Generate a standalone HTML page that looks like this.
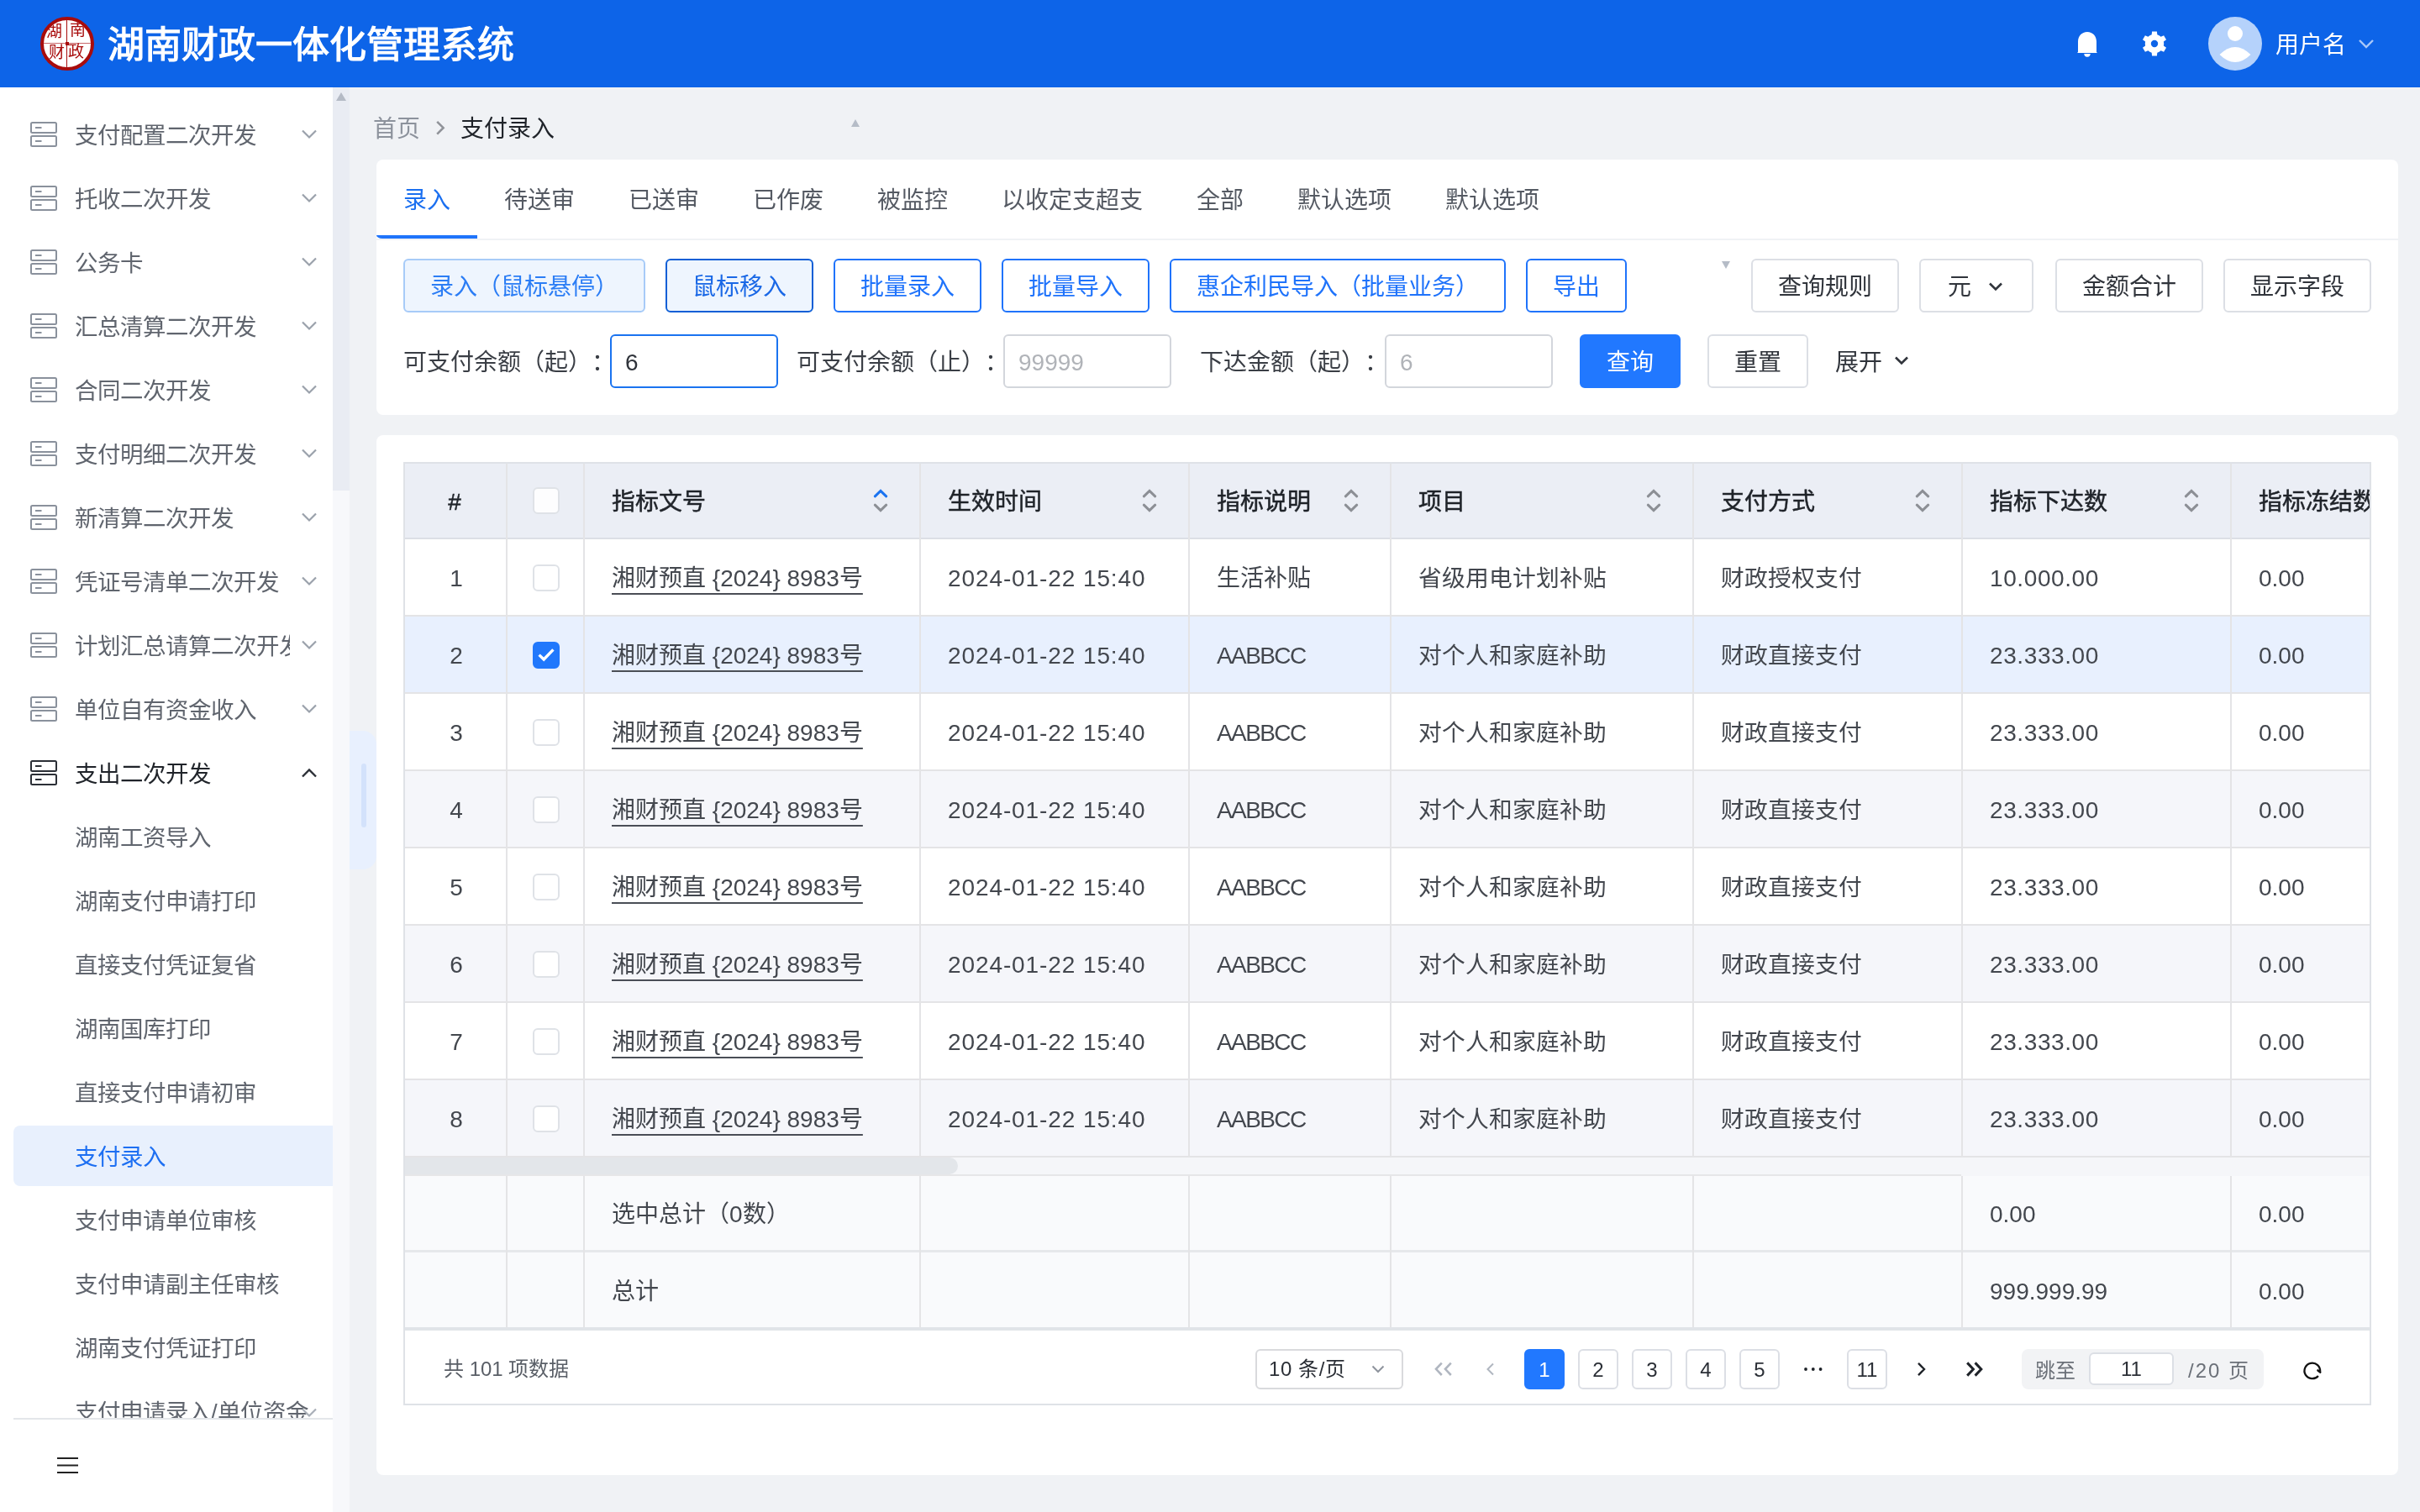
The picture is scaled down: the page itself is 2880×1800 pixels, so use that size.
<!DOCTYPE html><html lang="zh-CN"><head><meta charset="utf-8"><title>湖南财政一体化管理系统</title><style>

*{box-sizing:border-box;margin:0;padding:0}
html,body{width:2880px;height:1800px;overflow:hidden}
body{position:relative;text-spacing-trim:space-all;background:#f0f2f5;font-family:"Liberation Sans", sans-serif;font-size:28px;color:#333}
.a{position:absolute}
.t{position:absolute;white-space:nowrap;line-height:40px;margin-top:2px}
#hdr{left:0;top:0;width:2880px;height:104px;background:#0d64e8}
#side{left:0;top:104px;width:396px;height:1696px;background:#fff;overflow:hidden}
.mi{position:absolute;left:0;width:396px;height:76px}
.mi .ic{position:absolute;left:36px;top:23px;width:32px;height:30px}
.mi .tx{position:absolute;left:89px;top:20px;line-height:40px;font-size:27.5px;color:#60656e;white-space:nowrap}
.mi .ch{position:absolute;left:358px;top:32px;width:20px;height:12px}
.card{position:absolute;background:#fff;border-radius:8px}
.btn{position:absolute;height:64px;border:2px solid #1f73fb;border-radius:6px;color:#1f73fb;font-size:28px;line-height:60px;padding-top:2px;text-align:center;white-space:nowrap;background:#fff}
.btn.g{border-color:#dcdfe5;color:#30343b}
.inp{position:absolute;height:64px;width:200px;border:2px solid #d3d6dc;border-radius:6px;font-size:28px;line-height:60px;padding-top:2px;padding-left:16px;color:#b0b3b8;background:#fff}
.lbl{position:absolute;margin-top:2px;font-size:28px;line-height:40px;color:#3a3e45;white-space:nowrap}
.tab{position:absolute;top:219px;font-size:28px;line-height:40px;color:#555a63;white-space:nowrap}
.vl{position:absolute;width:2px;background:#e4e4e6}
.hl{position:absolute;height:2px;background:#e4e4e6}
.cell{position:absolute;margin-top:2px;font-size:28px;line-height:40px;color:#43474e;white-space:nowrap}
.hc{position:absolute;margin-top:2px;font-size:28px;line-height:40px;color:#1f2329;font-weight:normal;-webkit-text-stroke:0.5px #1f2329;white-space:nowrap}
.cb{position:absolute;width:32px;height:32px;border:2px solid #dfe2e7;border-radius:6px;background:#fff}
.pg{position:absolute;top:1606px;width:48px;height:48px;border:2px solid #dcdfe5;border-radius:6px;font-size:24px;line-height:44px;padding-top:1px;text-align:center;color:#2b2f36;background:#fff}

</style></head><body><div id="root" style="position:absolute;left:0;top:0;width:2880px;height:1800px;overflow:hidden;will-change:transform">
<div id="hdr" class="a">
<div class="a" style="left:48px;top:20px;width:64px;height:64px;border-radius:50%;background:#fff;border:4.5px solid #a80c0c;overflow:hidden;font-size:19px;line-height:19px;color:#a80c0c">
<div class="a" style="left:27px;top:0;width:1.4px;height:64px;background:#a80c0c"></div>
<div class="a" style="left:0;top:27px;width:64px;height:1.2px;background:#c9686b"></div>
<div class="a" style="left:26px;top:26px;width:3.5px;height:3.5px;background:#a80c0c"></div>
<span class="a" style="left:3px;top:4px">湖</span><span class="a" style="left:31px;top:2px">南</span>
<span class="a" style="left:6px;top:29px">财</span><span class="a" style="left:29px;top:28px">政</span>
</div>
<div class="t" style="left:128px;top:22px;font-size:44px;line-height:60px;color:#fff;font-weight:normal;-webkit-text-stroke:1.2px #fff;letter-spacing:0px">湖南财政一体化管理系统</div>
<svg class="a" style="left:2472px;top:38px" width="24" height="30" viewBox="0 0 24 30">
<path d="M12 0 C5.5 0 1 5 1 11.5 V24.5 H0 V25 H24 V24.5 H23 V11.5 C23 5 18.5 0 12 0 Z" fill="#fff"/>
<path d="M8.3 26 H15.7 A3.7 3.7 0 0 1 8.3 26 Z" fill="#fff"/>
</svg>
<svg class="a" style="left:2549px;top:37px" width="30" height="30" viewBox="0 0 30 30"><path fill="#fff" fill-rule="evenodd" d="M11.69 4.30 L12.06 0.50 L17.94 0.50 L18.31 4.30 A11.20 11.20 0 0 1 22.61 6.78 L26.09 5.20 L29.03 10.29 L25.92 12.52 A11.20 11.20 0 0 1 25.92 17.48 L29.03 19.71 L26.09 24.80 L22.61 23.22 A11.20 11.20 0 0 1 18.31 25.70 L17.94 29.50 L12.06 29.50 L11.69 25.70 A11.20 11.20 0 0 1 7.39 23.22 L3.91 24.80 L0.97 19.71 L4.08 17.48 A11.20 11.20 0 0 1 4.08 12.52 L0.97 10.29 L3.91 5.20 L7.39 6.78 A11.20 11.20 0 0 1 11.69 4.30 Z M19.2 15 A4.2 4.2 0 1 0 10.8 15 A4.2 4.2 0 1 0 19.2 15 Z"/></svg>
<svg class="a" style="left:2628px;top:20px" width="64" height="64" viewBox="0 0 64 64">
<circle cx="32" cy="32" r="32" fill="#b5d2fb"/>
<circle cx="32" cy="20" r="9" fill="#fff"/>
<path d="M13.5 45 Q32 27 50.5 45 Q32 63 13.5 45 Z" fill="#fff"/>
</svg>
<div class="t" style="left:2708px;top:32px;font-size:28px;color:#fff">用户名</div>
<svg class="a" style="left:2806px;top:46px" width="20" height="12" viewBox="0 0 20 12"><path d="M2 2 L10 10 L18 2" fill="none" stroke="#a9c8f8" stroke-width="2.4"/></svg>
</div>
<div id="side" class="a">
<div class="mi" style="top:18px"><svg class="ic" viewBox="0 0 32 30"><g fill="none" stroke="#8a919c" stroke-width="2"><rect x="1" y="1" width="30" height="12" rx="1.5"/><rect x="1" y="17" width="30" height="12" rx="1.5"/></g><rect x="6" y="6" width="7.5" height="2" fill="#8a919c"/><rect x="6" y="22" width="7.5" height="2" fill="#8a919c"/></svg><div class="tx" style="color:#60656e;">支付配置二次开发</div><svg class="ch" viewBox="0 0 20 12"><path d="M2 1.5 L10 9.5 L18 1.5" fill="none" stroke="#9aa1ab" stroke-width="2.2"/></svg></div>
<div class="mi" style="top:94px"><svg class="ic" viewBox="0 0 32 30"><g fill="none" stroke="#8a919c" stroke-width="2"><rect x="1" y="1" width="30" height="12" rx="1.5"/><rect x="1" y="17" width="30" height="12" rx="1.5"/></g><rect x="6" y="6" width="7.5" height="2" fill="#8a919c"/><rect x="6" y="22" width="7.5" height="2" fill="#8a919c"/></svg><div class="tx" style="color:#60656e;">托收二次开发</div><svg class="ch" viewBox="0 0 20 12"><path d="M2 1.5 L10 9.5 L18 1.5" fill="none" stroke="#9aa1ab" stroke-width="2.2"/></svg></div>
<div class="mi" style="top:170px"><svg class="ic" viewBox="0 0 32 30"><g fill="none" stroke="#8a919c" stroke-width="2"><rect x="1" y="1" width="30" height="12" rx="1.5"/><rect x="1" y="17" width="30" height="12" rx="1.5"/></g><rect x="6" y="6" width="7.5" height="2" fill="#8a919c"/><rect x="6" y="22" width="7.5" height="2" fill="#8a919c"/></svg><div class="tx" style="color:#60656e;">公务卡</div><svg class="ch" viewBox="0 0 20 12"><path d="M2 1.5 L10 9.5 L18 1.5" fill="none" stroke="#9aa1ab" stroke-width="2.2"/></svg></div>
<div class="mi" style="top:246px"><svg class="ic" viewBox="0 0 32 30"><g fill="none" stroke="#8a919c" stroke-width="2"><rect x="1" y="1" width="30" height="12" rx="1.5"/><rect x="1" y="17" width="30" height="12" rx="1.5"/></g><rect x="6" y="6" width="7.5" height="2" fill="#8a919c"/><rect x="6" y="22" width="7.5" height="2" fill="#8a919c"/></svg><div class="tx" style="color:#60656e;">汇总清算二次开发</div><svg class="ch" viewBox="0 0 20 12"><path d="M2 1.5 L10 9.5 L18 1.5" fill="none" stroke="#9aa1ab" stroke-width="2.2"/></svg></div>
<div class="mi" style="top:322px"><svg class="ic" viewBox="0 0 32 30"><g fill="none" stroke="#8a919c" stroke-width="2"><rect x="1" y="1" width="30" height="12" rx="1.5"/><rect x="1" y="17" width="30" height="12" rx="1.5"/></g><rect x="6" y="6" width="7.5" height="2" fill="#8a919c"/><rect x="6" y="22" width="7.5" height="2" fill="#8a919c"/></svg><div class="tx" style="color:#60656e;">合同二次开发</div><svg class="ch" viewBox="0 0 20 12"><path d="M2 1.5 L10 9.5 L18 1.5" fill="none" stroke="#9aa1ab" stroke-width="2.2"/></svg></div>
<div class="mi" style="top:398px"><svg class="ic" viewBox="0 0 32 30"><g fill="none" stroke="#8a919c" stroke-width="2"><rect x="1" y="1" width="30" height="12" rx="1.5"/><rect x="1" y="17" width="30" height="12" rx="1.5"/></g><rect x="6" y="6" width="7.5" height="2" fill="#8a919c"/><rect x="6" y="22" width="7.5" height="2" fill="#8a919c"/></svg><div class="tx" style="color:#60656e;">支付明细二次开发</div><svg class="ch" viewBox="0 0 20 12"><path d="M2 1.5 L10 9.5 L18 1.5" fill="none" stroke="#9aa1ab" stroke-width="2.2"/></svg></div>
<div class="mi" style="top:474px"><svg class="ic" viewBox="0 0 32 30"><g fill="none" stroke="#8a919c" stroke-width="2"><rect x="1" y="1" width="30" height="12" rx="1.5"/><rect x="1" y="17" width="30" height="12" rx="1.5"/></g><rect x="6" y="6" width="7.5" height="2" fill="#8a919c"/><rect x="6" y="22" width="7.5" height="2" fill="#8a919c"/></svg><div class="tx" style="color:#60656e;">新清算二次开发</div><svg class="ch" viewBox="0 0 20 12"><path d="M2 1.5 L10 9.5 L18 1.5" fill="none" stroke="#9aa1ab" stroke-width="2.2"/></svg></div>
<div class="mi" style="top:550px"><svg class="ic" viewBox="0 0 32 30"><g fill="none" stroke="#8a919c" stroke-width="2"><rect x="1" y="1" width="30" height="12" rx="1.5"/><rect x="1" y="17" width="30" height="12" rx="1.5"/></g><rect x="6" y="6" width="7.5" height="2" fill="#8a919c"/><rect x="6" y="22" width="7.5" height="2" fill="#8a919c"/></svg><div class="tx" style="color:#60656e;">凭证号清单二次开发</div><svg class="ch" viewBox="0 0 20 12"><path d="M2 1.5 L10 9.5 L18 1.5" fill="none" stroke="#9aa1ab" stroke-width="2.2"/></svg></div>
<div class="mi" style="top:626px"><svg class="ic" viewBox="0 0 32 30"><g fill="none" stroke="#8a919c" stroke-width="2"><rect x="1" y="1" width="30" height="12" rx="1.5"/><rect x="1" y="17" width="30" height="12" rx="1.5"/></g><rect x="6" y="6" width="7.5" height="2" fill="#8a919c"/><rect x="6" y="22" width="7.5" height="2" fill="#8a919c"/></svg><div class="tx" style="color:#60656e;overflow:hidden;width:256px;">计划汇总请算二次开发</div><svg class="ch" viewBox="0 0 20 12"><path d="M2 1.5 L10 9.5 L18 1.5" fill="none" stroke="#9aa1ab" stroke-width="2.2"/></svg></div>
<div class="mi" style="top:702px"><svg class="ic" viewBox="0 0 32 30"><g fill="none" stroke="#8a919c" stroke-width="2"><rect x="1" y="1" width="30" height="12" rx="1.5"/><rect x="1" y="17" width="30" height="12" rx="1.5"/></g><rect x="6" y="6" width="7.5" height="2" fill="#8a919c"/><rect x="6" y="22" width="7.5" height="2" fill="#8a919c"/></svg><div class="tx" style="color:#60656e;">单位自有资金收入</div><svg class="ch" viewBox="0 0 20 12"><path d="M2 1.5 L10 9.5 L18 1.5" fill="none" stroke="#9aa1ab" stroke-width="2.2"/></svg></div>
<div class="mi" style="top:778px"><svg class="ic" viewBox="0 0 32 30"><g fill="none" stroke="#2b2f36" stroke-width="2"><rect x="1" y="1" width="30" height="12" rx="1.5"/><rect x="1" y="17" width="30" height="12" rx="1.5"/></g><rect x="6" y="6" width="7.5" height="2" fill="#2b2f36"/><rect x="6" y="22" width="7.5" height="2" fill="#2b2f36"/></svg><div class="tx" style="color:#1f2329;">支出二次开发</div><svg class="ch" viewBox="0 0 20 12"><path d="M2 10.5 L10 2.5 L18 10.5" fill="none" stroke="#2b2f36" stroke-width="2.4"/></svg></div>
<div class="mi" style="top:854px"><div class="tx">湖南工资导入</div></div>
<div class="mi" style="top:930px"><div class="tx">湖南支付申请打印</div></div>
<div class="mi" style="top:1006px"><div class="tx">直接支付凭证复省</div></div>
<div class="mi" style="top:1082px"><div class="tx">湖南国库打印</div></div>
<div class="mi" style="top:1158px"><div class="tx">直接支付申请初审</div></div>
<div class="a" style="left:16px;top:1236px;width:380px;height:72px;background:#e8f0fd;border-radius:8px 0 0 8px"></div>
<div class="mi" style="top:1234px"><div class="tx" style="color:#1d6ff2">支付录入</div></div>
<div class="mi" style="top:1310px"><div class="tx">支付申请单位审核</div></div>
<div class="mi" style="top:1386px"><div class="tx">支付申请副主任审核</div></div>
<div class="mi" style="top:1462px"><div class="tx">湖南支付凭证打印</div></div>
<div class="mi" style="top:1538px"><div class="tx">支付申请录入/单位资金</div></div>
<svg class="a" style="left:358px;top:1572px" width="20" height="12" viewBox="0 0 20 12"><path d="M2 1.5 L10 9.5 L18 1.5" fill="none" stroke="#a9afb8" stroke-width="2.2"/></svg>
<div class="a" style="left:0;top:1584px;width:396px;height:200px;background:#fff"></div>
<div class="a" style="left:16px;top:1584px;width:380px;height:2px;background:#e4e6ea"></div>
<svg class="a" style="left:68px;top:1631px" width="25" height="19" viewBox="0 0 25 19"><g stroke="#222" stroke-width="2"><line x1="0" y1="1" x2="25" y2="1"/><line x1="0" y1="9.5" x2="25" y2="9.5"/><line x1="0" y1="18" x2="25" y2="18"/></g></svg>
</div>
<div class="a" style="left:396px;top:104px;width:20px;height:1696px;background:#f7f8fb"></div>
<div class="a" style="left:396px;top:104px;width:20px;height:480px;background:#e9ecf3"></div>
<svg class="a" style="left:400px;top:110px" width="12" height="10" viewBox="0 0 12 10"><path d="M6 0 L12 10 L0 10 Z" fill="#b4bac5"/></svg>
<div class="a" style="left:416px;top:870px;width:32px;height:165px;background:#e8f0fe;border-radius:0 16px 16px 0"></div>
<div class="a" style="left:430px;top:909px;width:6px;height:76px;background:#d3e2fb;border-radius:3px"></div>
<div class="t" style="left:444px;top:132px;color:#8c929c">首页</div>
<svg class="a" style="left:518px;top:143px" width="13" height="18" viewBox="0 0 13 18"><path d="M2.2 1.8 L9.6 9.2 L2.2 16.6" fill="none" stroke="#909399" stroke-width="2.6"/></svg>
<div class="t" style="left:548px;top:132px;color:#1f2329">支付录入</div>
<svg class="a" style="left:1013px;top:142px" width="10" height="9" viewBox="0 0 10 9"><path d="M5 0 L10 9 L0 9 Z" fill="#b5bcc7"/></svg>
<div class="card" style="left:448px;top:190px;width:2406px;height:304px"></div>
<div class="tab" style="left:480px;color:#1a6ff0">录入</div>
<div class="tab" style="left:600px;color:#555a63">待送审</div>
<div class="tab" style="left:748px;color:#555a63">已送审</div>
<div class="tab" style="left:896px;color:#555a63">已作废</div>
<div class="tab" style="left:1044px;color:#555a63">被监控</div>
<div class="tab" style="left:1192px;color:#555a63">以收定支超支</div>
<div class="tab" style="left:1424px;color:#555a63">全部</div>
<div class="tab" style="left:1544px;color:#555a63">默认选项</div>
<div class="tab" style="left:1720px;color:#555a63">默认选项</div>
<div class="a" style="left:448px;top:284px;width:2406px;height:2px;background:#f0f2f5"></div>
<div class="a" style="left:448px;top:280px;width:120px;height:4px;background:#1f74fb;border-radius:0 0 0 7px / 0 0 0 4px"></div>
<div class="btn" style="left:480px;top:308px;width:288px;background:#eef5fe;border-color:#a7cbf8;color:#2b7df5">录入（鼠标悬停）</div>
<div class="btn" style="left:792px;top:308px;width:176px;background:#eef5fe;border-color:#0e5fd6;color:#1a68e6">鼠标移入</div>
<div class="btn" style="left:992px;top:308px;width:176px">批量录入</div>
<div class="btn" style="left:1192px;top:308px;width:176px">批量导入</div>
<div class="btn" style="left:1392px;top:308px;width:400px">惠企利民导入（批量业务）</div>
<div class="btn" style="left:1816px;top:308px;width:120px">导出</div>
<svg class="a" style="left:2049px;top:311px" width="10" height="9" viewBox="0 0 10 9"><path d="M0 0 L10 0 L5 9 Z" fill="#b5bcc7"/></svg>
<div class="btn g" style="left:2084px;top:308px;width:176px">查询规则</div>
<div class="btn g" style="left:2284px;top:308px;width:136px;text-align:left;padding-left:32px">元<svg class="a" style="left:80px;top:26px" width="18" height="11" viewBox="0 0 18 11"><path d="M2 1.5 L9 8.5 L16 1.5" fill="none" stroke="#30343b" stroke-width="2.6"/></svg></div>
<div class="btn g" style="left:2446px;top:308px;width:176px">金额合计</div>
<div class="btn g" style="left:2646px;top:308px;width:176px">显示字段</div>
<div class="lbl" style="left:480px;top:410px">可支付余额（起）：</div>
<div class="inp" style="left:726px;top:398px;border-color:#1a73f0;color:#30343b">6</div>
<div class="lbl" style="left:948px;top:410px">可支付余额（止）：</div>
<div class="inp" style="left:1194px;top:398px">99999</div>
<div class="lbl" style="left:1428px;top:410px">下达金额（起）：</div>
<div class="inp" style="left:1648px;top:398px">6</div>
<div class="btn" style="left:1880px;top:398px;width:120px;background:#2178ff;border-color:#2178ff;color:#fff">查询</div>
<div class="btn g" style="left:2032px;top:398px;width:120px">重置</div>
<div class="lbl" style="left:2184px;top:410px;color:#30343b">展开</div>
<svg class="a" style="left:2254px;top:424px" width="18" height="11" viewBox="0 0 18 11"><path d="M2 1.5 L9 8.5 L16 1.5" fill="none" stroke="#30343b" stroke-width="2.6"/></svg>
<div class="card" style="left:448px;top:518px;width:2406px;height:1238px"></div>
<div class="a" style="left:480px;top:550px;width:2342px;height:1123px;overflow:hidden;border:2px solid #dfe2e7;border-right:2px solid #dfe2e7">
<div class="a" style="left:0;top:0;width:2400px;height:88px;background:#ebeef5"></div>
<div class="a" style="left:0;top:89px;width:2400px;height:92px;background:#fff"></div>
<div class="a" style="left:0;top:181px;width:2400px;height:92px;background:#e8f0fe"></div>
<div class="a" style="left:0;top:273px;width:2400px;height:92px;background:#fff"></div>
<div class="a" style="left:0;top:365px;width:2400px;height:92px;background:#f5f6fa"></div>
<div class="a" style="left:0;top:457px;width:2400px;height:92px;background:#fff"></div>
<div class="a" style="left:0;top:549px;width:2400px;height:92px;background:#f5f6fa"></div>
<div class="a" style="left:0;top:641px;width:2400px;height:92px;background:#fff"></div>
<div class="a" style="left:0;top:733px;width:2400px;height:92px;background:#f5f6fa"></div>
<div class="a" style="left:0;top:826px;width:2400px;height:22px;background:#f5f6f9"></div>
<div class="a" style="left:0;top:826px;width:658px;height:20px;background:#e3e6ea;border-radius:0 10px 10px 0"></div>
<div class="a" style="left:0;top:848px;width:2400px;height:184px;background:#f9fafc"></div>
<div class="a" style="left:0;top:1032px;width:2400px;height:100px;background:#fff"></div>
<div class="hl" style="left:0;top:88px;width:2400px;background:#dcdfe5"></div>
<div class="hl" style="left:0;top:180px;width:2400px"></div>
<div class="hl" style="left:0;top:272px;width:2400px"></div>
<div class="hl" style="left:0;top:364px;width:2400px"></div>
<div class="hl" style="left:0;top:456px;width:2400px"></div>
<div class="hl" style="left:0;top:548px;width:2400px"></div>
<div class="hl" style="left:0;top:640px;width:2400px"></div>
<div class="hl" style="left:0;top:732px;width:2400px"></div>
<div class="hl" style="left:0;top:824px;width:2400px"></div>
<div class="hl" style="left:0;top:846px;width:1852px;background:#e6e6e8"></div>
<div class="hl" style="left:0;top:936px;width:2400px;height:3px;background:#e6e8eb"></div>
<div class="hl" style="left:0;top:1028px;width:2400px;height:4px;background:#e1e4e8"></div>
<div class="vl" style="left:120px;top:0;height:824px"></div>
<div class="vl" style="left:120px;top:848px;height:180px"></div>
<div class="vl" style="left:212px;top:0;height:824px"></div>
<div class="vl" style="left:212px;top:848px;height:180px"></div>
<div class="vl" style="left:612px;top:0;height:824px"></div>
<div class="vl" style="left:612px;top:848px;height:180px"></div>
<div class="vl" style="left:932px;top:0;height:824px"></div>
<div class="vl" style="left:932px;top:848px;height:180px"></div>
<div class="vl" style="left:1172px;top:0;height:824px"></div>
<div class="vl" style="left:1172px;top:848px;height:180px"></div>
<div class="vl" style="left:1532px;top:0;height:824px"></div>
<div class="vl" style="left:1532px;top:848px;height:180px"></div>
<div class="vl" style="left:1852px;top:0;height:824px"></div>
<div class="vl" style="left:1852px;top:848px;height:180px"></div>
<div class="vl" style="left:2172px;top:0;height:824px"></div>
<div class="vl" style="left:2172px;top:848px;height:180px"></div>
<div class="hc" style="left:-2px;top:24px;width:122px;text-align:center">#</div>
<div class="cb" style="left:152px;top:28px;background:#fdfdfe"></div>
<div class="hc" style="left:246px;top:24px">指标文号</div>
<svg class="a" style="left:556px;top:30px" width="20" height="28" viewBox="0 0 20 28"><path d="M3.3 8.8 L10 2.3 L16.7 8.8" fill="none" stroke="#1a73f0" stroke-width="3" stroke-linecap="round"/><path d="M3.3 19.2 L10 25.7 L16.7 19.2" fill="none" stroke="#8c8f95" stroke-width="3" stroke-linecap="round"/></svg>
<div class="hc" style="left:646px;top:24px">生效时间</div>
<svg class="a" style="left:876px;top:30px" width="20" height="28" viewBox="0 0 20 28"><path d="M3.3 8.8 L10 2.3 L16.7 8.8" fill="none" stroke="#8c8f95" stroke-width="3" stroke-linecap="round"/><path d="M3.3 19.2 L10 25.7 L16.7 19.2" fill="none" stroke="#8c8f95" stroke-width="3" stroke-linecap="round"/></svg>
<div class="hc" style="left:966px;top:24px">指标说明</div>
<svg class="a" style="left:1116px;top:30px" width="20" height="28" viewBox="0 0 20 28"><path d="M3.3 8.8 L10 2.3 L16.7 8.8" fill="none" stroke="#8c8f95" stroke-width="3" stroke-linecap="round"/><path d="M3.3 19.2 L10 25.7 L16.7 19.2" fill="none" stroke="#8c8f95" stroke-width="3" stroke-linecap="round"/></svg>
<div class="hc" style="left:1206px;top:24px">项目</div>
<svg class="a" style="left:1476px;top:30px" width="20" height="28" viewBox="0 0 20 28"><path d="M3.3 8.8 L10 2.3 L16.7 8.8" fill="none" stroke="#8c8f95" stroke-width="3" stroke-linecap="round"/><path d="M3.3 19.2 L10 25.7 L16.7 19.2" fill="none" stroke="#8c8f95" stroke-width="3" stroke-linecap="round"/></svg>
<div class="hc" style="left:1566px;top:24px">支付方式</div>
<svg class="a" style="left:1796px;top:30px" width="20" height="28" viewBox="0 0 20 28"><path d="M3.3 8.8 L10 2.3 L16.7 8.8" fill="none" stroke="#8c8f95" stroke-width="3" stroke-linecap="round"/><path d="M3.3 19.2 L10 25.7 L16.7 19.2" fill="none" stroke="#8c8f95" stroke-width="3" stroke-linecap="round"/></svg>
<div class="hc" style="left:1886px;top:24px">指标下达数</div>
<svg class="a" style="left:2116px;top:30px" width="20" height="28" viewBox="0 0 20 28"><path d="M3.3 8.8 L10 2.3 L16.7 8.8" fill="none" stroke="#8c8f95" stroke-width="3" stroke-linecap="round"/><path d="M3.3 19.2 L10 25.7 L16.7 19.2" fill="none" stroke="#8c8f95" stroke-width="3" stroke-linecap="round"/></svg>
<div class="hc" style="left:2206px;top:24px">指标冻结数</div>
<div class="cell" style="left:0;top:115px;width:122px;text-align:center">1</div>
<div class="cb" style="left:152px;top:120px"></div>
<div class="cell" style="left:246px;top:115px;text-decoration:underline;text-underline-offset:7.5px;text-decoration-thickness:2px;text-decoration-color:#4a4e56">湘财预直 {2024} 8983号</div>
<div class="cell" style="left:646px;top:115px;letter-spacing:0.9px">2024-01-22 15:40</div>
<div class="cell" style="left:966px;top:115px;">生活补贴</div>
<div class="cell" style="left:1206px;top:115px;font-size:27.75px">省级用电计划补贴</div>
<div class="cell" style="left:1566px;top:115px;font-size:27.75px">财政授权支付</div>
<div class="cell" style="left:1886px;top:115px;letter-spacing:0.6px">10.000.00</div>
<div class="cell" style="left:2206px;top:115px">0.00</div>
<div class="cell" style="left:0;top:207px;width:122px;text-align:center">2</div>
<div class="cb" style="left:152px;top:212px;background:#2178fc;border-color:#2178fc"><svg class="a" style="left:-2px;top:-2px" width="32" height="32" viewBox="0 0 32 32"><path d="M7.6 15.6 L13.2 21 L24.4 9.4" fill="none" stroke="#fff" stroke-width="3.4"/></svg></div>
<div class="cell" style="left:246px;top:207px;text-decoration:underline;text-underline-offset:7.5px;text-decoration-thickness:2px;text-decoration-color:#4a4e56">湘财预直 {2024} 8983号</div>
<div class="cell" style="left:646px;top:207px;letter-spacing:0.9px">2024-01-22 15:40</div>
<div class="cell" style="left:966px;top:207px;letter-spacing:-1.6px">AABBCC</div>
<div class="cell" style="left:1206px;top:207px;font-size:27.75px">对个人和家庭补助</div>
<div class="cell" style="left:1566px;top:207px;font-size:27.75px">财政直接支付</div>
<div class="cell" style="left:1886px;top:207px;letter-spacing:0.6px">23.333.00</div>
<div class="cell" style="left:2206px;top:207px">0.00</div>
<div class="cell" style="left:0;top:299px;width:122px;text-align:center">3</div>
<div class="cb" style="left:152px;top:304px"></div>
<div class="cell" style="left:246px;top:299px;text-decoration:underline;text-underline-offset:7.5px;text-decoration-thickness:2px;text-decoration-color:#4a4e56">湘财预直 {2024} 8983号</div>
<div class="cell" style="left:646px;top:299px;letter-spacing:0.9px">2024-01-22 15:40</div>
<div class="cell" style="left:966px;top:299px;letter-spacing:-1.6px">AABBCC</div>
<div class="cell" style="left:1206px;top:299px;font-size:27.75px">对个人和家庭补助</div>
<div class="cell" style="left:1566px;top:299px;font-size:27.75px">财政直接支付</div>
<div class="cell" style="left:1886px;top:299px;letter-spacing:0.6px">23.333.00</div>
<div class="cell" style="left:2206px;top:299px">0.00</div>
<div class="cell" style="left:0;top:391px;width:122px;text-align:center">4</div>
<div class="cb" style="left:152px;top:396px"></div>
<div class="cell" style="left:246px;top:391px;text-decoration:underline;text-underline-offset:7.5px;text-decoration-thickness:2px;text-decoration-color:#4a4e56">湘财预直 {2024} 8983号</div>
<div class="cell" style="left:646px;top:391px;letter-spacing:0.9px">2024-01-22 15:40</div>
<div class="cell" style="left:966px;top:391px;letter-spacing:-1.6px">AABBCC</div>
<div class="cell" style="left:1206px;top:391px;font-size:27.75px">对个人和家庭补助</div>
<div class="cell" style="left:1566px;top:391px;font-size:27.75px">财政直接支付</div>
<div class="cell" style="left:1886px;top:391px;letter-spacing:0.6px">23.333.00</div>
<div class="cell" style="left:2206px;top:391px">0.00</div>
<div class="cell" style="left:0;top:483px;width:122px;text-align:center">5</div>
<div class="cb" style="left:152px;top:488px"></div>
<div class="cell" style="left:246px;top:483px;text-decoration:underline;text-underline-offset:7.5px;text-decoration-thickness:2px;text-decoration-color:#4a4e56">湘财预直 {2024} 8983号</div>
<div class="cell" style="left:646px;top:483px;letter-spacing:0.9px">2024-01-22 15:40</div>
<div class="cell" style="left:966px;top:483px;letter-spacing:-1.6px">AABBCC</div>
<div class="cell" style="left:1206px;top:483px;font-size:27.75px">对个人和家庭补助</div>
<div class="cell" style="left:1566px;top:483px;font-size:27.75px">财政直接支付</div>
<div class="cell" style="left:1886px;top:483px;letter-spacing:0.6px">23.333.00</div>
<div class="cell" style="left:2206px;top:483px">0.00</div>
<div class="cell" style="left:0;top:575px;width:122px;text-align:center">6</div>
<div class="cb" style="left:152px;top:580px"></div>
<div class="cell" style="left:246px;top:575px;text-decoration:underline;text-underline-offset:7.5px;text-decoration-thickness:2px;text-decoration-color:#4a4e56">湘财预直 {2024} 8983号</div>
<div class="cell" style="left:646px;top:575px;letter-spacing:0.9px">2024-01-22 15:40</div>
<div class="cell" style="left:966px;top:575px;letter-spacing:-1.6px">AABBCC</div>
<div class="cell" style="left:1206px;top:575px;font-size:27.75px">对个人和家庭补助</div>
<div class="cell" style="left:1566px;top:575px;font-size:27.75px">财政直接支付</div>
<div class="cell" style="left:1886px;top:575px;letter-spacing:0.6px">23.333.00</div>
<div class="cell" style="left:2206px;top:575px">0.00</div>
<div class="cell" style="left:0;top:667px;width:122px;text-align:center">7</div>
<div class="cb" style="left:152px;top:672px"></div>
<div class="cell" style="left:246px;top:667px;text-decoration:underline;text-underline-offset:7.5px;text-decoration-thickness:2px;text-decoration-color:#4a4e56">湘财预直 {2024} 8983号</div>
<div class="cell" style="left:646px;top:667px;letter-spacing:0.9px">2024-01-22 15:40</div>
<div class="cell" style="left:966px;top:667px;letter-spacing:-1.6px">AABBCC</div>
<div class="cell" style="left:1206px;top:667px;font-size:27.75px">对个人和家庭补助</div>
<div class="cell" style="left:1566px;top:667px;font-size:27.75px">财政直接支付</div>
<div class="cell" style="left:1886px;top:667px;letter-spacing:0.6px">23.333.00</div>
<div class="cell" style="left:2206px;top:667px">0.00</div>
<div class="cell" style="left:0;top:759px;width:122px;text-align:center">8</div>
<div class="cb" style="left:152px;top:764px"></div>
<div class="cell" style="left:246px;top:759px;text-decoration:underline;text-underline-offset:7.5px;text-decoration-thickness:2px;text-decoration-color:#4a4e56">湘财预直 {2024} 8983号</div>
<div class="cell" style="left:646px;top:759px;letter-spacing:0.9px">2024-01-22 15:40</div>
<div class="cell" style="left:966px;top:759px;letter-spacing:-1.6px">AABBCC</div>
<div class="cell" style="left:1206px;top:759px;font-size:27.75px">对个人和家庭补助</div>
<div class="cell" style="left:1566px;top:759px;font-size:27.75px">财政直接支付</div>
<div class="cell" style="left:1886px;top:759px;letter-spacing:0.6px">23.333.00</div>
<div class="cell" style="left:2206px;top:759px">0.00</div>
<div class="cell" style="left:246px;top:872px">选中总计（0数）</div>
<div class="cell" style="left:1886px;top:872px">0.00</div>
<div class="cell" style="left:2206px;top:872px">0.00</div>
<div class="cell" style="left:246px;top:964px">总计</div>
<div class="cell" style="left:1886px;top:964px">999.999.99</div>
<div class="cell" style="left:2206px;top:964px">0.00</div>
</div>
<div class="t" style="left:528px;top:1610px;font-size:24px;line-height:36px;color:#595e66">共 101 项数据</div>
<div class="a" style="left:1494px;top:1606px;width:176px;height:48px;border:2px solid #d9dadd;border-radius:6px;background:#fff"></div>
<div class="t" style="left:1510px;top:1610px;font-size:24px;line-height:36px;color:#2b2f36;letter-spacing:0.6px">10 条/页</div>
<svg class="a" style="left:1632px;top:1625px" width="16" height="10" viewBox="0 0 16 10"><path d="M1.5 1.5 L8 8 L14.5 1.5" fill="none" stroke="#8e949d" stroke-width="2"/></svg>
<svg class="a" style="left:1706px;top:1620px" width="24" height="20" viewBox="0 0 24 20"><path d="M9.8 2.6 L3 9.8 L9.8 17 M20.8 2.6 L14 9.8 L20.8 17" fill="none" stroke="#b0b6c0" stroke-width="2.6"/></svg>
<svg class="a" style="left:1768px;top:1622px" width="12" height="16" viewBox="0 0 12 16"><path d="M9 1.5 L2.5 8 L9 14.5" fill="none" stroke="#b0b6c0" stroke-width="2"/></svg>
<div class="pg" style="left:1814px;background:#2178ff;border-color:#2178ff;color:#fff">1</div>
<div class="pg" style="left:1878px">2</div>
<div class="pg" style="left:1942px">3</div>
<div class="pg" style="left:2006px">4</div>
<div class="pg" style="left:2070px">5</div>
<div class="pg" style="left:2198px">11</div>
<svg class="a" style="left:2145px;top:1626px" width="26" height="8" viewBox="0 0 26 8"><circle cx="4" cy="4" r="1.9" fill="#1f2329"/><circle cx="12.8" cy="4" r="1.9" fill="#1f2329"/><circle cx="21.6" cy="4" r="1.9" fill="#1f2329"/></svg>
<svg class="a" style="left:2280px;top:1620px" width="13" height="20" viewBox="0 0 13 20"><path d="M3 2.8 L10 10 L3 17.2" fill="none" stroke="#1f2329" stroke-width="2.4"/></svg>
<svg class="a" style="left:2338px;top:1620px" width="24" height="20" viewBox="0 0 24 20"><path d="M3.2 2.4 L10.4 10 L3.2 17.6 M12.6 2.4 L19.8 10 L12.6 17.6" fill="none" stroke="#1f2329" stroke-width="3"/></svg>
<div class="a" style="left:2406px;top:1606px;width:288px;height:48px;background:#f2f3f5;border-radius:8px"></div>
<div class="t" style="left:2422px;top:1612px;font-size:24px;line-height:36px;color:#6b7078">跳至</div>
<div class="a" style="left:2486px;top:1610px;width:101px;height:39px;background:#fff;border:2px solid #dcdfe5;border-radius:6px;font-size:24px;line-height:35px;text-align:center;color:#2b2f36">11</div>
<div class="t" style="left:2604px;top:1612px;font-size:24px;line-height:36px;color:#6b7078;letter-spacing:2px">/20 页</div>
<svg class="a" style="left:2740px;top:1620px" width="24" height="24" viewBox="0 0 24 24"><path d="M18.9 17.9 A9.3 9.3 0 1 1 21 13.2" fill="none" stroke="#111" stroke-width="2.3"/><path d="M18.5 11.4 L21.2 13.6" fill="none" stroke="#111" stroke-width="2.6" stroke-linecap="round"/></svg>
</div></body></html>
